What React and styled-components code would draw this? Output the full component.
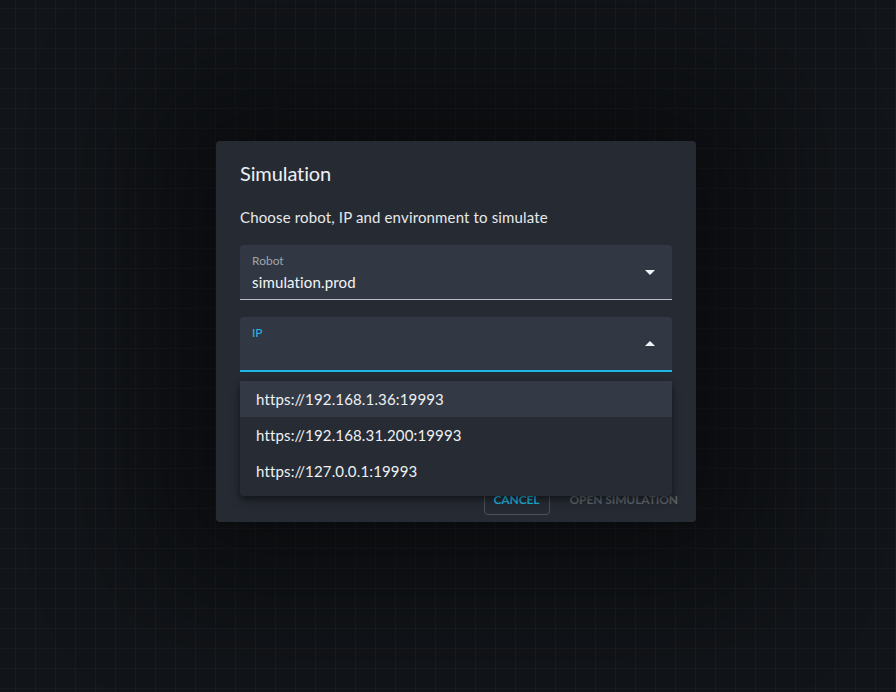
import React from 'react';
import styled, { createGlobalStyle } from 'styled-components';

const GlobalStyle = createGlobalStyle`
  html, body {
    margin: 0;
    padding: 0;
    background: #111418;
    font-family: Lato, "Noto Sans", sans-serif;
  }
`;

const ips = [
  'https://192.168.1.36:19993',
  'https://192.168.31.200:19993',
  'https://127.0.0.1:19993',
];

function ArrowIcon({ up }) {
  return (
    <svg width="10" height="5" viewBox="0 0 10 5">
      <path d={up ? 'M0 5 L5 0 L10 5 Z' : 'M0 0 L5 5 L10 0 Z'} fill="#f2f4f7" />
    </svg>
  );
}

function SelectField({ label, value, focused }) {
  return (
    <Field $focused={focused}>
      <FieldText>
        <FieldLabel $focused={focused}>{label}</FieldLabel>
        <FieldValue>{value || '\u00a0'}</FieldValue>
      </FieldText>
      <ArrowIcon up={focused} />
    </Field>
  );
}

export default function App() {
  return (
    <>
      <GlobalStyle />
      <Page>
        <Dialog>
          <Title>Simulation</Title>
          <Content>
            <Description>Choose robot, IP and environment to simulate</Description>
            <SelectField label="Robot" value="simulation.prod" />
            <SelectField label="IP" focused />
          </Content>
          <Actions>
            <CancelButton>Cancel</CancelButton>
            <OpenButton disabled>Open simulation</OpenButton>
          </Actions>
          <Menu>
            {ips.map((ip, i) => (
              <MenuItem key={ip} $active={i === 0}>{ip}</MenuItem>
            ))}
          </Menu>
        </Dialog>
      </Page>
    </>
  );
}

const Page = styled.div`
  width: 896px;
  height: 692px;
  box-sizing: border-box;
  padding: 141px 0 0 216px;
  overflow: hidden;
  background-color: #111418;
  background-image:
    linear-gradient(to right, rgba(58, 58, 70, 0.18) 1px, transparent 1px),
    linear-gradient(to bottom, rgba(58, 58, 70, 0.18) 1px, transparent 1px);
  background-size: 20px 20px;
  background-position: 15px 8px;
`;

const Dialog = styled.div`
  position: relative;
  width: 480px;
  box-sizing: border-box;
  background: #262b33;
  border-radius: 4px;
  box-shadow: 0 0 120px 60px rgba(0, 0, 0, 0.45);
  color: #eef0f3;
`;

const Title = styled.h2`
  margin: 0;
  padding: 19px 24px 20px;
  font-size: 20px;
  font-weight: 400;
  letter-spacing: -0.1px;
  line-height: 26px;
`;

const Content = styled.div`
  display: flex;
  flex-direction: column;
  gap: 17px;
  padding: 0 24px 112px;
`;

const Description = styled.p`
  margin: 0;
  font-size: 15px;
  letter-spacing: 0.15px;
  line-height: 22px;
  color: #e6e8ec;
`;

const Field = styled.div`
  display: flex;
  align-items: center;
  box-sizing: border-box;
  height: 55px;
  padding: 0 17px 0 12px;
  background: #323843;
  border-radius: 4px 4px 0 0;
  border-bottom: ${(p) => (p.$focused ? '2px solid #1fb8e6' : '1px solid #b9bdc4')};
`;

const FieldText = styled.div`
  flex: 1;
  display: flex;
  flex-direction: column;
  gap: 3px;
  padding-top: 3px;
`;

const FieldLabel = styled.span`
  font-size: 12px;
  line-height: 14px;
  color: ${(p) => (p.$focused ? '#1fb8e6' : '#9ea3ab')};
`;

const FieldValue = styled.span`
  font-size: 15px;
  letter-spacing: 0.15px;
  line-height: 22px;
  color: #f2f4f7;
`;

const Actions = styled.div`
  display: flex;
  justify-content: flex-end;
  align-items: center;
  gap: 12px;
  padding: 0 10px 7px;
`;

const BaseButton = styled.button`
  height: 31px;
  padding: 0 9px;
  background: transparent;
  border-radius: 4px;
  font-family: Lato, "Noto Sans", sans-serif;
  font-size: 12px;
  font-weight: 700;
  letter-spacing: -0.1px;
  text-transform: uppercase;
`;

const CancelButton = styled(BaseButton)`
  border: 1px solid #4b515b;
  color: #1fb0dc;
`;

const OpenButton = styled(BaseButton)`
  border: none;
  padding: 0 8px;
  color: #5f646c;
`;

const Menu = styled.div`
  position: absolute;
  left: 24px;
  right: 24px;
  top: 240px;
  padding-bottom: 7px;
  background: #272c34;
  border-radius: 4px;
  box-shadow: 0 5px 10px rgba(0, 0, 0, 0.35), 0 2px 4px rgba(0, 0, 0, 0.25);
`;

const MenuItem = styled.div`
  height: 36px;
  display: flex;
  align-items: center;
  padding: 0 16px;
  font-size: 15px;
  letter-spacing: 0.15px;
  color: #eef0f3;
  background: ${(p) => (p.$active ? '#343a45' : 'transparent')};
`;
